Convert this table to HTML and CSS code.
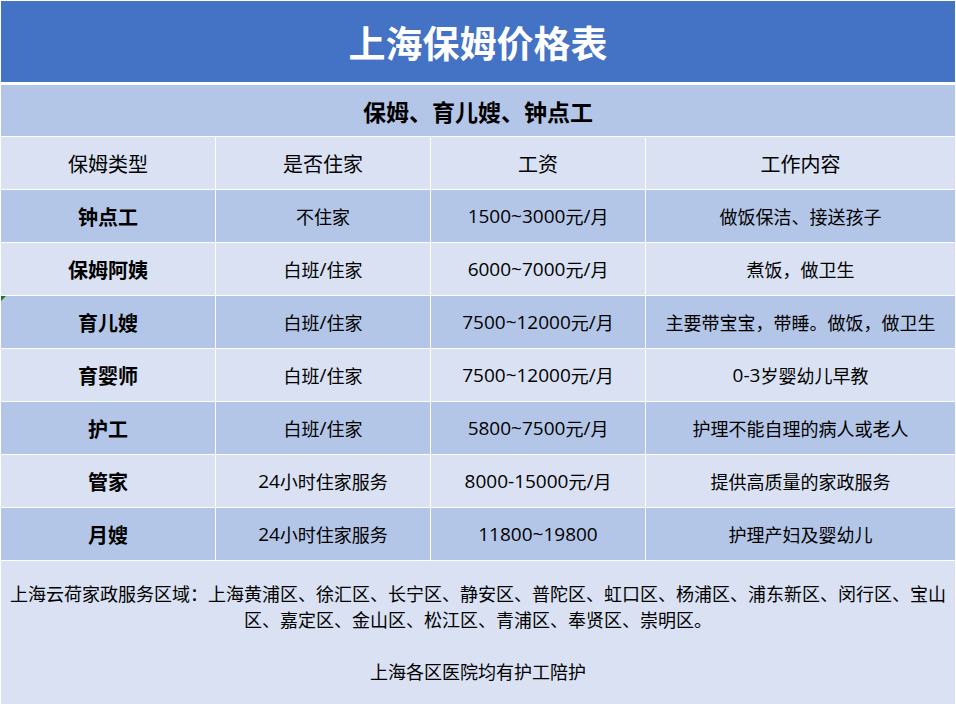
FILE: index.html
```html
<!DOCTYPE html>
<html lang="zh-CN">
<head>
<meta charset="utf-8">
<title>上海保姆价格表</title>
<link rel="stylesheet" href="styles.css">
</head>
<body>
<div class="sheet">
  <div class="title">上海保姆价格表</div>
  <div class="sub">保姆、育儿嫂、钟点工</div>
  <div class="row light head">
    <div class="cell">保姆类型</div>
    <div class="cell">是否住家</div>
    <div class="cell">工资</div>
    <div class="cell">工作内容</div>
  </div>
  <div class="row dark">
    <div class="cell name">钟点工</div>
    <div class="cell">不住家</div>
    <div class="cell"><span class="num">1500~3000</span>元<span class="num">/</span>月</div>
    <div class="cell">做饭保洁、接送孩子</div>
  </div>
  <div class="row light">
    <div class="cell name">保姆阿姨</div>
    <div class="cell">白班<span class="num">/</span>住家</div>
    <div class="cell"><span class="num">6000~7000</span>元<span class="num">/</span>月</div>
    <div class="cell">煮饭，做卫生</div>
  </div>
  <div class="row dark">
    <div class="cell name flag">育儿嫂</div>
    <div class="cell">白班<span class="num">/</span>住家</div>
    <div class="cell"><span class="num">7500~12000</span>元<span class="num">/</span>月</div>
    <div class="cell">主要带宝宝，带睡。做饭，做卫生</div>
  </div>
  <div class="row light">
    <div class="cell name">育婴师</div>
    <div class="cell">白班<span class="num">/</span>住家</div>
    <div class="cell"><span class="num">7500~12000</span>元<span class="num">/</span>月</div>
    <div class="cell"><span class="num">0-3</span>岁婴幼儿早教</div>
  </div>
  <div class="row dark">
    <div class="cell name">护工</div>
    <div class="cell">白班<span class="num">/</span>住家</div>
    <div class="cell"><span class="num">5800~7500</span>元<span class="num">/</span>月</div>
    <div class="cell">护理不能自理的病人或老人</div>
  </div>
  <div class="row light">
    <div class="cell name">管家</div>
    <div class="cell"><span class="num">24</span>小时住家服务</div>
    <div class="cell"><span class="num">8000-15000</span>元<span class="num">/</span>月</div>
    <div class="cell">提供高质量的家政服务</div>
  </div>
  <div class="row dark">
    <div class="cell name">月嫂</div>
    <div class="cell"><span class="num">24</span>小时住家服务</div>
    <div class="cell"><span class="num">11800~19800</span></div>
    <div class="cell">护理产妇及婴幼儿</div>
  </div>
  <div class="foot">
    <p class="para">上海云荷家政服务区域：上海黄浦区、徐汇区、长宁区、静安区、普陀区、虹口区、杨浦区、浦东新区、闵行区、宝山区、嘉定区、金山区、松江区、青浦区、奉贤区、崇明区。</p>
    <p class="para gap">上海各区医院均有护工陪护</p>
  </div>
</div>
</body>
</html>
```

FILE: styles.css
```css
html, body {
  margin: 0;
  padding: 0;
  background: #ffffff;
}

body {
  font-family: "Noto Sans CJK SC", "Microsoft YaHei", sans-serif;
  color: #000000;
}

.sheet {
  width: 956px;
  height: 704px;
  box-sizing: border-box;
  padding: 1px 1px 0 1px;
  background: #ffffff;
  display: flex;
  flex-direction: column;
  gap: 1px;
  overflow: hidden;
}

.title {
  height: 81px;
  margin-bottom: 2px;
  background: #4472c4;
  color: #ffffff;
  font-size: 37px;
  font-weight: 700;
  display: flex;
  align-items: center;
  justify-content: center;
}

.sub {
  height: 51px;
  background: #b4c6e7;
  font-size: 23px;
  font-weight: 700;
  display: flex;
  align-items: center;
  justify-content: center;
}

.row {
  height: 52px;
  display: grid;
  grid-template-columns: 214px 214px 214px 309px;
  gap: 1px;
}

.cell {
  display: flex;
  align-items: center;
  justify-content: center;
  font-size: 18px;
  white-space: nowrap;
}

.num {
  font-family: "Open Sans", "Noto Sans CJK SC", sans-serif;
  font-size: 19px;
}

.light .cell {
  background: #d9e1f2;
}

.dark .cell {
  background: #b4c6e7;
}

.head .cell {
  font-size: 20px;
}

.cell.name {
  font-size: 20px;
  font-weight: 700;
}

.flag {
  position: relative;
}

.flag::before {
  content: "";
  position: absolute;
  left: 0;
  top: 0;
  width: 0;
  height: 0;
  border-top: 5px solid #1e7a1e;
  border-right: 5px solid transparent;
}

.foot {
  flex: 1;
  background: #d9e1f2;
  padding: 19px 4px 0 4px;
  font-size: 18px;
  line-height: 26px;
  text-align: center;
}

.para {
  margin: 0;
}

.para.gap {
  margin-top: 26px;
}
```
